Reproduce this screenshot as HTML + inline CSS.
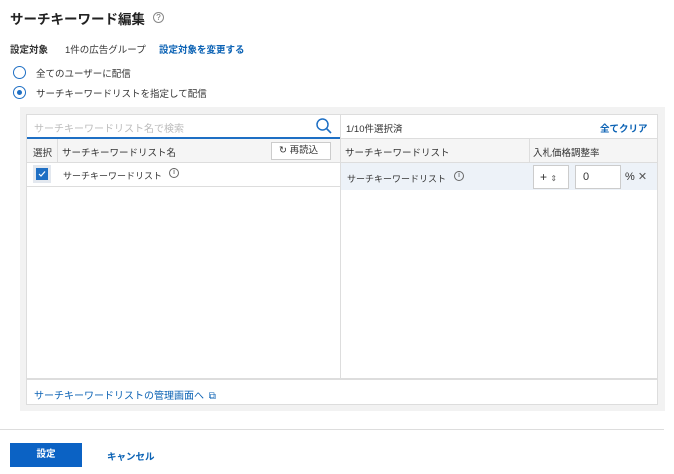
<!DOCTYPE html>
<html><head><meta charset="utf-8"><style>
*{box-sizing:border-box;margin:0;padding:0}
body{width:674px;height:474px;background:#fff;font-family:"Liberation Sans","Noto Sans CJK JP",sans-serif;color:#333;font-size:9.5px;position:relative;overflow:hidden}
.a{position:absolute;white-space:nowrap}
.blue{color:#0b62b4}
.s{font-size:9px}
</style></head><body>
<div class="a" style="left:10px;top:8px;font-size:13.5px;font-weight:bold;color:#222">サーチキーワード編集</div>
<div class="a" style="left:153px;top:12px;width:11px;height:11px;border:1px solid #888;border-radius:50%;font-size:8px;line-height:9px;text-align:center;color:#666">?</div>
<div class="a" style="left:10px;top:42px;font-weight:bold">設定対象</div>
<div class="a" style="left:65px;top:42px">1件の広告グループ</div>
<div class="a blue" style="left:159px;top:42px;font-weight:bold">設定対象を変更する</div>
<div class="a" style="left:13px;top:66px;width:13px;height:13px;border:1.5px solid #1e6fc4;border-radius:50%"></div>
<div class="a" style="left:36px;top:66px">全てのユーザーに配信</div>
<div class="a" style="left:13px;top:86px;width:13px;height:13px;border:1.5px solid #1e6fc4;border-radius:50%"><div style="margin:2.5px;width:5px;height:5px;border-radius:50%;background:#1e6fc4"></div></div>
<div class="a" style="left:36px;top:86px">サーチキーワードリストを指定して配信</div>

<div class="a" style="left:20px;top:107px;width:645px;height:304px;background:#f2f2f2"></div>
<div class="a" style="left:26px;top:114px;width:632px;height:291px;background:#fff;border:1px solid #ddd"></div>
<!-- left -->
<div class="a" style="left:34px;top:120px;color:#bbb;font-size:10px">サーチキーワードリスト名で検索</div>
<svg class="a" style="left:315px;top:117px" width="18" height="18" viewBox="0 0 18 18"><circle cx="7.5" cy="7.5" r="5.5" fill="none" stroke="#1e6fc4" stroke-width="1.5"/><path d="M11.5 11.5L16 16" stroke="#1e6fc4" stroke-width="1.6"/></svg>
<div class="a" style="left:27px;top:137px;width:313px;height:2px;background:#1e6fc4"></div>
<div class="a" style="left:27px;top:139px;width:313px;height:24px;background:#f5f5f5;border-bottom:1px solid #ddd"></div>
<div class="a" style="left:57px;top:139px;width:1px;height:24px;background:#ddd"></div>
<div class="a" style="left:33px;top:145px">選択</div>
<div class="a" style="left:62px;top:145px">サーチキーワードリスト名</div>
<div class="a" style="left:271px;top:142px;width:60px;height:18px;border:1px solid #ccc;background:#fff;padding-left:7px;line-height:16px">↻ 再読込</div>
<div class="a" style="left:33px;top:165px;width:18px;height:18px;background:#e3e8ef"></div>
<div class="a" style="left:36px;top:168px;width:12px;height:12px;background:#1e6fc4"><svg width="12" height="12"><path d="M3 6l2 2 4-4.5" stroke="#fff" fill="none" stroke-width="1.2"/></svg></div>
<div class="a s" style="left:63px;top:169px">サーチキーワードリスト</div>
<div class="a" style="left:169px;top:168px;width:10px;height:10px;border:1px solid #666;border-radius:50%;font-size:7px;line-height:8px;text-align:center">i</div>
<div class="a" style="left:27px;top:186px;width:313px;height:1px;background:#ddd"></div>
<div class="a" style="left:340px;top:114px;width:1px;height:265px;background:#ddd"></div>
<div class="a" style="left:27px;top:378px;width:630px;height:2px;background:#ddd"></div>
<div class="a blue" style="left:34px;top:387px;font-size:10px">サーチキーワードリストの管理画面へ <span style="margin-left:2px">⧉</span></div>
<!-- right -->
<div class="a" style="left:346px;top:121px">1/10件選択済</div>
<div class="a blue" style="left:600px;top:121px;font-weight:bold">全てクリア</div>
<div class="a" style="left:341px;top:138px;width:316px;height:25px;background:#f5f5f5;border-top:1px solid #ddd;border-bottom:1px solid #ddd"></div>
<div class="a" style="left:529px;top:138px;width:1px;height:25px;background:#ddd"></div>
<div class="a" style="left:345px;top:145px">サーチキーワードリスト</div>
<div class="a" style="left:533px;top:145px">入札価格調整率</div>
<div class="a" style="left:341px;top:163px;width:316px;height:27px;background:#edf2f8"></div>
<div class="a s" style="left:347px;top:172px">サーチキーワードリスト</div>
<div class="a" style="left:454px;top:171px;width:10px;height:10px;border:1px solid #666;border-radius:50%;font-size:7px;line-height:8px;text-align:center">i</div>
<div class="a" style="left:533px;top:165px;width:36px;height:24px;background:#fff;border:1px solid #ccc;padding-left:6px;line-height:22px;font-size:12px">+ <span style="font-size:8px;color:#666">⇕</span></div>
<div class="a" style="left:575px;top:165px;width:46px;height:24px;background:#fff;border:1px solid #ccc;padding-left:7px;line-height:22px;font-size:11px">0</div>
<div class="a" style="left:625px;top:170px;font-size:11px">% <span style="color:#555">✕</span></div>

<div class="a" style="left:0;top:429px;width:664px;height:1px;background:#ddd"></div>
<div class="a" style="left:10px;top:443px;width:72px;height:24px;background:#0b62c4;color:#fff;font-weight:bold;text-align:center;line-height:24px">設定</div>
<div class="a blue" style="left:107px;top:449px;font-weight:bold">キャンセル</div>
</body></html>
